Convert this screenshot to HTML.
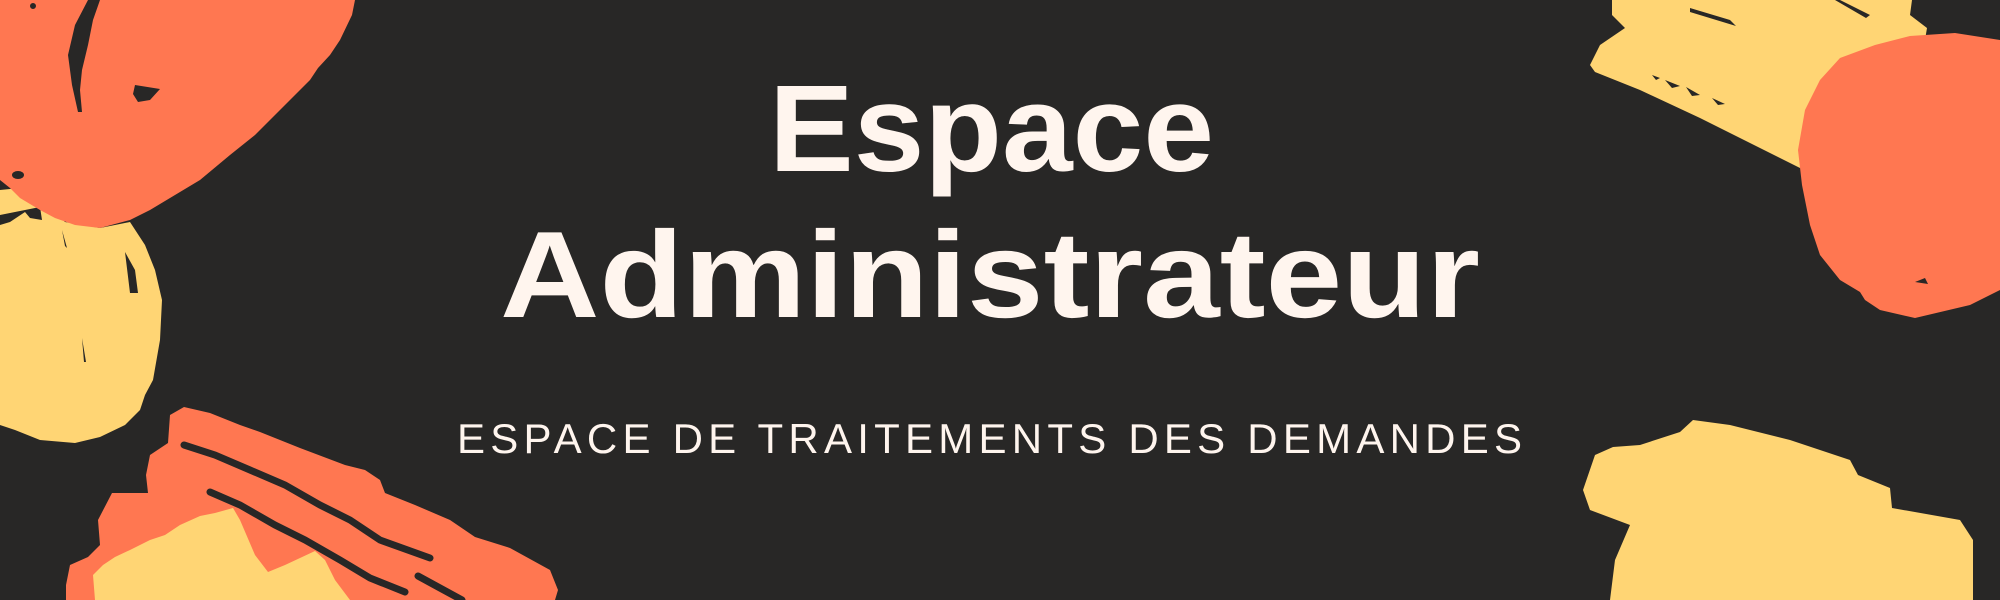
<!DOCTYPE html>
<html><head><meta charset="utf-8"><style>
html,body{margin:0;padding:0;background:#282726;}
svg{display:block}
</style></head><body>
<svg width="2000" height="600" viewBox="0 0 2000 600" xmlns="http://www.w3.org/2000/svg">
<rect width="2000" height="600" fill="#282726"/>
<!-- top-left yellow -->
<path fill="#ffd574" d="M0 190 L20 188 L45 203 L65 222 L100 228 L130 222 L145 245 L155 270 L162 300 L160 340 L153 380 L145 395 L140 410 L125 425 L100 437 L75 443 L40 440 L15 430 L0 425 Z"/>
<path fill="#282726" d="M0 215 L40 207 L42 220 L30 218 L25 212 L10 222 L0 225Z M62 230 L67 248 L65 246Z M125 252 L135 270 L138 293 L130 293Z M82 338 L86 362 L84 362Z"/>
<!-- top-left orange -->
<path fill="#ff7751" d="M0 0 L355 0 L352 15 L340 40 L330 55 L318 68 L310 80 L300 90 L285 105 L275 115 L255 135 L230 155 L200 180 L175 195 L150 210 L130 220 L100 228 L75 225 L55 218 L40 210 L20 198 L10 188 L0 180 Z"/>
<path fill="#282726" d="M88 0 L100 0 L93 20 L88 45 L82 70 L80 90 L82 112 L78 112 L72 85 L68 55 L75 25 Z M135 85 L160 89 L150 100 L138 102 L133 94Z M12 175 a6 4 0 1 0 12 0 a6 4 0 1 0 -12 0Z M30 6 a3 3 0 1 0 6 0 a3 3 0 1 0 -6 0Z"/>
<!-- bottom-left orange -->
<path fill="#ff7751" d="M184 407 L210 413 L240 425 L260 432 L300 448 L345 465 L365 470 L380 480 L385 493 L415 505 L450 520 L475 537 L510 548 L550 570 L558 590 L555 600 L66 600 L66 585 L70 565 L88 557 L100 545 L98 520 L112 493 L148 493 L146 475 L150 455 L168 443 L170 415 Z"/>
<path fill="#ffd574" d="M95 600 L93 575 L103 565 L115 557 L130 550 L150 540 L165 535 L180 525 L200 516 L215 513 L233 508 L240 520 L255 555 L268 572 L285 565 L315 551 L325 560 L335 580 L350 600 Z"/>
<path fill="none" stroke="#282726" stroke-width="7" stroke-linecap="round" d="M184 445 L215 455 L250 470 L285 485 L320 505 L350 520 L380 540 L430 558"/>
<path fill="none" stroke="#282726" stroke-width="7" stroke-linecap="round" d="M210 492 L240 505 L275 525 L305 540 L340 560 L370 578 L405 592"/>
<path fill="none" stroke="#282726" stroke-width="7" stroke-linecap="round" d="M418 576 L440 588 L462 600"/>
<!-- top-right yellow -->
<path fill="#ffd574" d="M1612 0 L1912 0 L1910 15 L1927 28 L1925 40 L1890 55 L1850 70 L1820 100 L1800 168 L1700 118 L1640 90 L1595 72 L1590 65 L1600 45 L1625 28 L1612 15 Z"/>
<path fill="#282726" d="M1690 8 L1730 20 L1736 26 L1690 12Z M1840 0 L1870 15 L1866 18 L1835 0Z M1652 75 L1660 78 L1656 80Z M1665 80 L1680 86 L1672 88Z M1686 87 L1700 95 L1692 96Z M1712 98 L1725 104 L1718 105Z"/>
<!-- right orange circle -->
<path fill="#ff7751" d="M1955 33 L2000 40 L2000 290 L1970 305 L1915 318 L1880 310 L1865 300 L1860 292 L1840 280 L1820 255 L1810 225 L1802 185 L1798 150 L1805 110 L1820 80 L1840 58 L1875 45 L1910 36 Z"/>
<path fill="#282726" d="M1915 282 L1925 278 L1928 284 Z"/>
<!-- bottom-right yellow -->
<path fill="#ffd574" d="M1693 420 L1730 425 L1790 440 L1850 460 L1858 475 L1890 488 L1892 508 L1960 520 L1973 540 L1973 600 L1610 600 L1615 560 L1630 525 L1590 510 L1583 490 L1595 455 L1613 447 L1640 445 L1680 432 Z"/>
<!-- text -->
<g fill="#fff5ee" font-family="Liberation Sans, Arial, sans-serif">
<text x="769" y="171" font-size="123" font-weight="700" textLength="445" lengthAdjust="spacingAndGlyphs">Espace</text>
<text x="500" y="317" font-size="123" font-weight="700" textLength="980" lengthAdjust="spacingAndGlyphs">Administrateur</text>
<text x="457" y="453" font-size="42" textLength="1065" lengthAdjust="spacing">ESPACE DE TRAITEMENTS DES DEMANDES</text>
</g>
</svg>
</body></html>
